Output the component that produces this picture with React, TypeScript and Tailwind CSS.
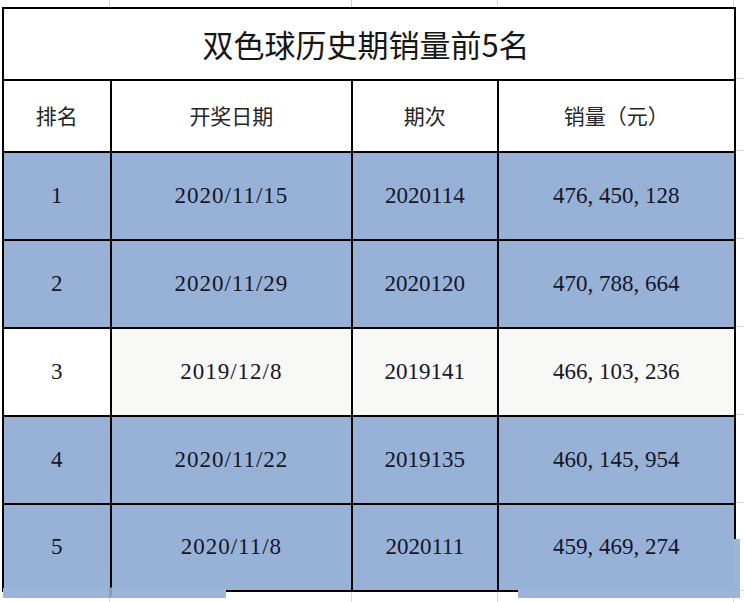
const rows = [
  { rank: "1", date: "2020/11/15", issue: "2020114", sales: "476, 450, 128", tint: true },
  { rank: "2", date: "2020/11/29", issue: "2020120", sales: "470, 788, 664", tint: true },
  { rank: "3", date: "2019/12/8", issue: "2019141", sales: "466, 103, 236", tint: false },
  { rank: "4", date: "2020/11/22", issue: "2019135", sales: "460, 145, 954", tint: true },
  { rank: "5", date: "2020/11/8", issue: "2020111", sales: "459, 469, 274", tint: true },
];

const cjk = { fontFamily: '"Noto Sans CJK SC", "Noto Sans", sans-serif' };
const num = { fontFamily: '"Liberation Serif", "DejaVu Serif", serif' };

export default function App() {
  return (
    <div className="relative w-[744px] h-[602px] overflow-hidden bg-white">
      {/* sheet gridlines above the table */}
      <div className="flex h-[7px] ml-[2px]">
        <div className="w-[108px] border-r border-[#d6d6d6]" />
        <div className="w-[242px] border-r border-[#d6d6d6]" />
        <div className="w-[146px] border-r border-[#d6d6d6]" />
        <div className="w-[236px] border-r border-[#d6d6d6]" />
      </div>

      <div className="flex ml-[2px]">
        <div className="w-[734px] border-l-2 border-t-2 border-black">
          {/* title */}
          <div
            className="h-[72px] flex items-center justify-center border-r-2 border-b-2 border-black text-[31px] text-[#161616] pr-[6px]"
            style={cjk}
          >
            双色球历史期销量前5名
          </div>

          {/* header */}
          <div className="flex h-[72px] text-[21px] text-[#262626]" style={cjk}>
            <div className="w-[108px] flex items-center justify-center border-r-2 border-b-2 border-black">排名</div>
            <div className="w-[242px] flex items-center justify-center border-r-2 border-b-2 border-black">开奖日期</div>
            <div className="w-[146px] flex items-center justify-center border-r-2 border-b-2 border-black">期次</div>
            <div className="w-[238px] flex items-center justify-center border-r-2 border-b-2 border-black">销量（元）</div>
          </div>

          {rows.map((r, i) => (
            <div
              key={i}
              className={`flex text-[23px] text-[#14162a] ${i === 4 ? "h-[87px]" : "h-[88px]"}`}
              style={num}
            >
              <div
                className={`w-[108px] flex items-center justify-center border-r-2 border-b-2 border-black ${
                  r.tint ? "bg-[#97b2d6]" : "bg-white"
                }`}
              >
                {r.rank}
              </div>
              <div
                className={`w-[242px] flex items-center justify-center border-r-2 border-b-2 border-black tracking-[1px] ${
                  r.tint ? "bg-[#97b2d6]" : "bg-[#f8f8f7]"
                }`}
              >
                {r.date}
              </div>
              <div
                className={`w-[146px] flex items-center justify-center border-r-2 border-b-2 border-black ${
                  r.tint ? "bg-[#97b2d6]" : "bg-[#f8f8f7]"
                }`}
              >
                {r.issue}
              </div>
              <div
                className={`w-[238px] flex items-center justify-center border-r-2 border-b-2 border-black ${
                  r.tint ? "bg-[#97b2d6]" : "bg-[#f8f8f7]"
                }`}
              >
                {r.sales}
              </div>
            </div>
          ))}
        </div>

        {/* sheet gridlines to the right */}
        <div className="flex-1 flex flex-col">
          <div className="h-[72px] border-b border-[#d6d6d6]" />
          <div className="h-[72px] border-b border-[#d6d6d6]" />
          <div className="h-[88px] border-b border-[#d6d6d6]" />
          <div className="h-[88px] border-b border-[#d6d6d6]" />
          <div className="h-[88px] border-b border-[#d6d6d6]" />
          <div className="h-[88px] border-b border-[#d6d6d6]" />
          <div className="h-[88px] border-b border-[#d6d6d6]" />
        </div>
      </div>

      {/* sheet gridlines below the table */}
      <div className="flex h-[20px] ml-[2px]">
        <div className="w-[108px] border-r border-[#d6d6d6]" />
        <div className="w-[242px] border-r border-[#d6d6d6]" />
        <div className="w-[146px] border-r border-[#d6d6d6]" />
        <div className="w-[236px] border-r border-[#d6d6d6]" />
      </div>

      {/* stray fill strips at the bottom edge */}
      <div className="absolute left-[3px] top-[588px] w-[223px] h-[10px] bg-[#9bb4d8]" />
      <div className="absolute left-[109px] top-[587px] w-[3px] h-[10px] bg-[#7d8ea6] opacity-60" />
      <div className="absolute left-[518px] top-[589px] w-[222px] h-[9px] bg-[#9bb4d8]" />
      <div className="absolute left-[733px] top-[539px] w-[7px] h-[59px] bg-[#9bb4d8]" />
    </div>
  );
}
